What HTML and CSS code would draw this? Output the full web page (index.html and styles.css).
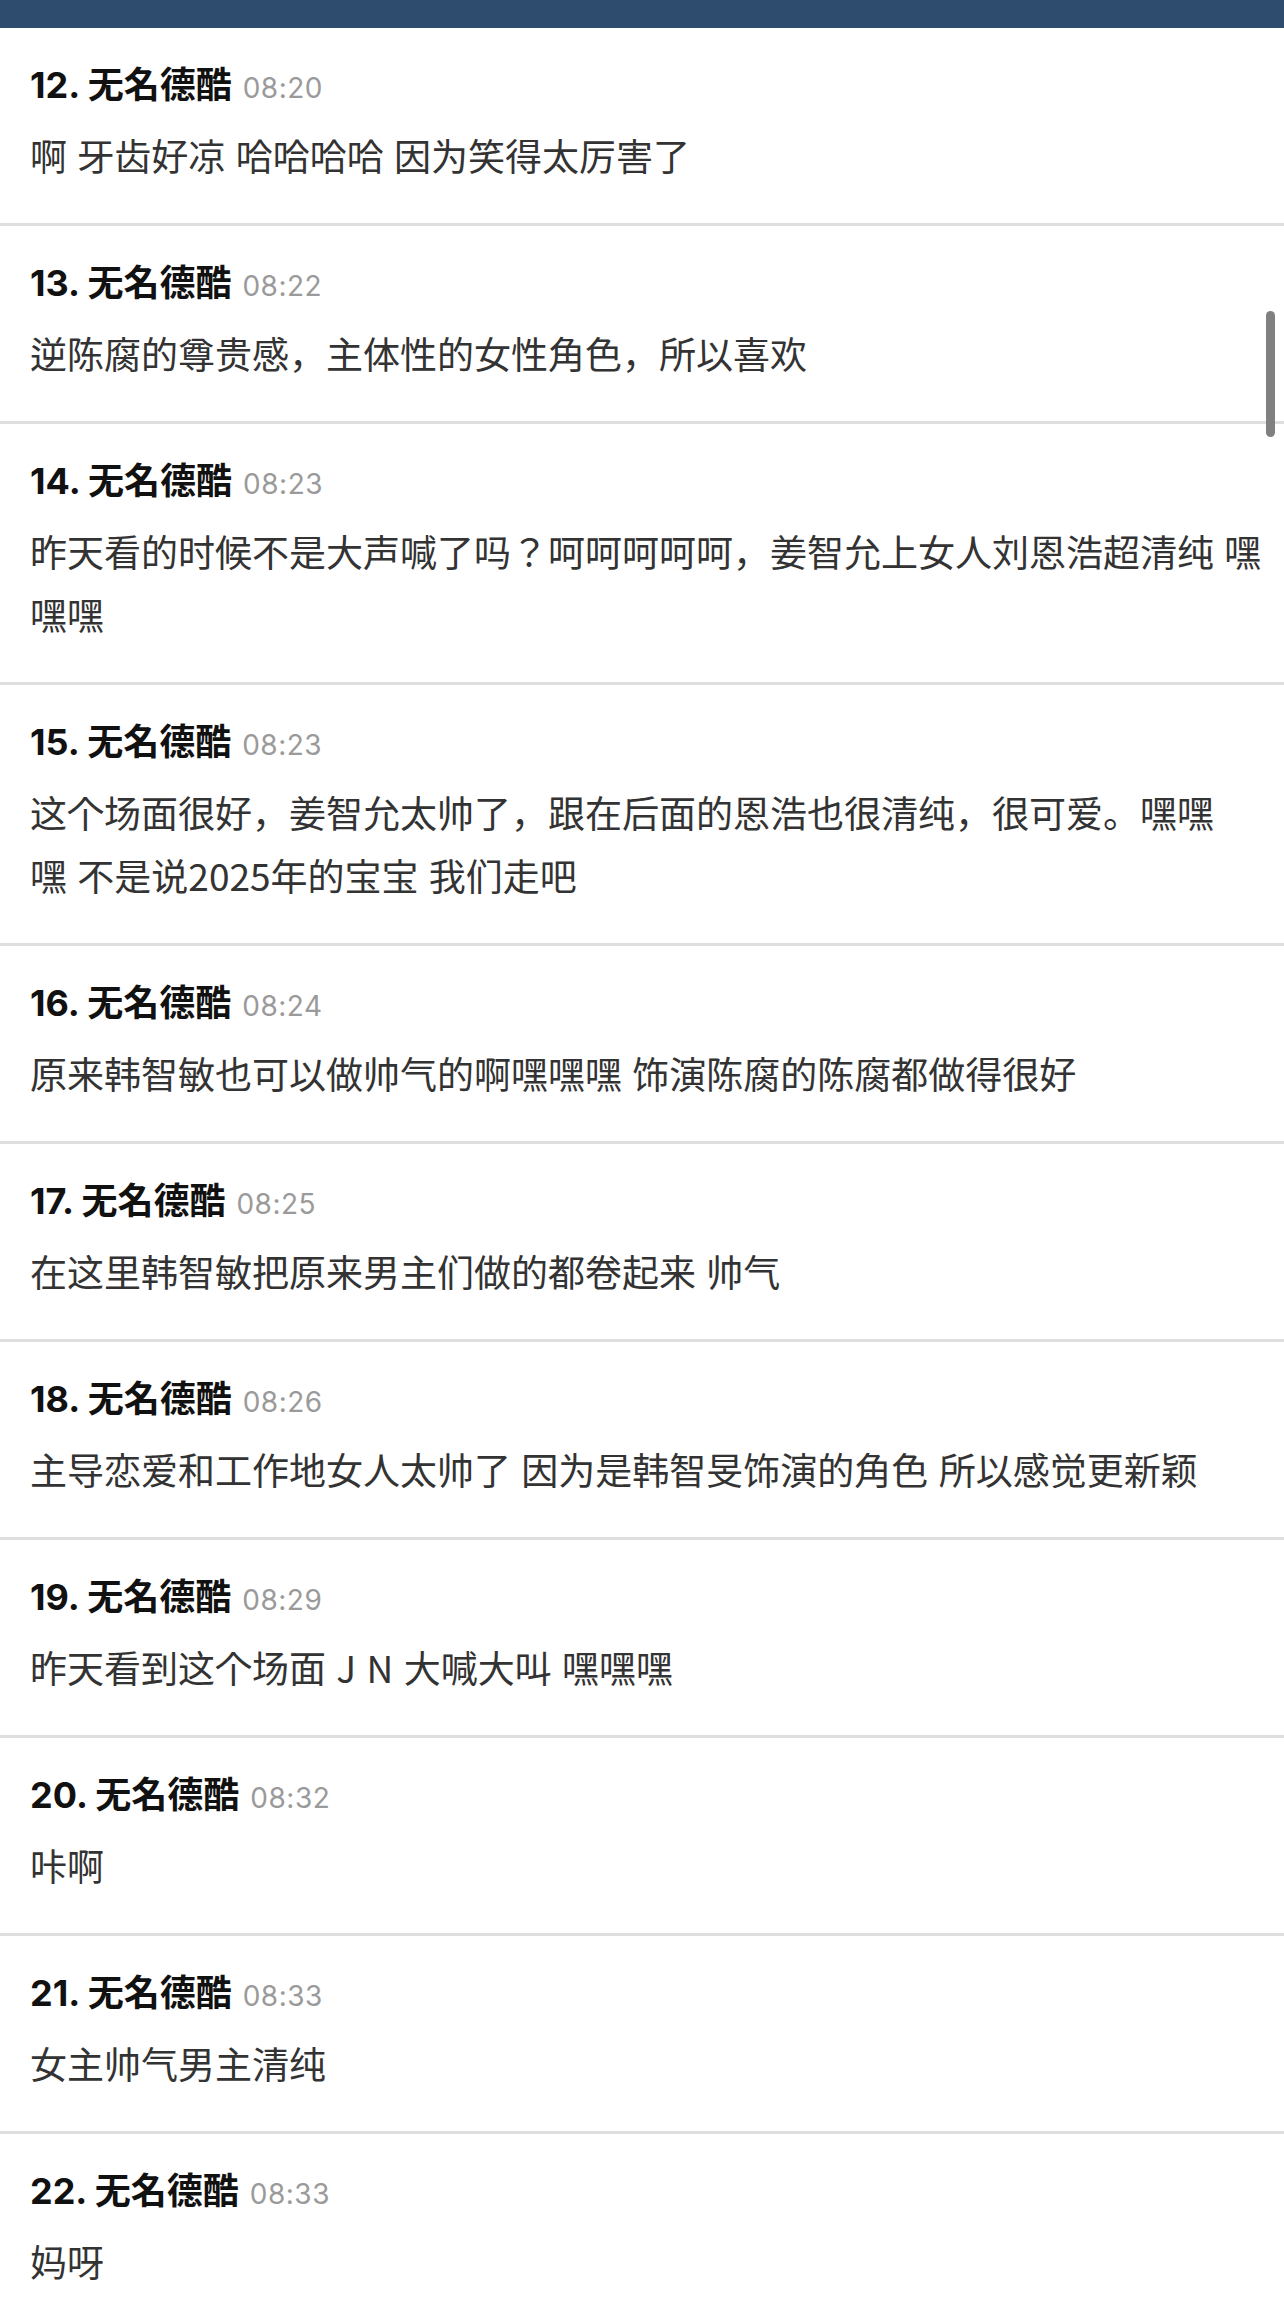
FILE: index.html
```html
<!DOCTYPE html>
<html lang="ko">
<head>
    <meta charset="UTF-8">
    <meta name="viewport" content="width=device-width, initial-scale=1.0">
    <title>评论</title>
    <link rel="stylesheet" href="styles.css">
</head>
<body>
    <div class="topbar"></div>

    <div class="comments">
        <div class="comment">
            <div class="meta"><span class="name">12. 无名德酷</span><span class="time">08:20</span></div>
            <p class="text">啊 牙齿好凉 哈哈哈哈 因为笑得太厉害了</p>
        </div>
        <div class="comment">
            <div class="meta"><span class="name">13. 无名德酷</span><span class="time">08:22</span></div>
            <p class="text">逆陈腐的尊贵感，主体性的女性角色，所以喜欢</p>
        </div>
        <div class="comment">
            <div class="meta"><span class="name">14. 无名德酷</span><span class="time">08:23</span></div>
            <p class="text">昨天看的时候不是大声喊了吗？呵呵呵呵呵，姜智允上女人刘恩浩超清纯 嘿嘿嘿</p>
        </div>
        <div class="comment">
            <div class="meta"><span class="name">15. 无名德酷</span><span class="time">08:23</span></div>
            <p class="text">这个场面很好，姜智允太帅了，跟在后面的恩浩也很清纯，很可爱。嘿嘿<br>嘿 不是说2025年的宝宝 我们走吧</p>
        </div>
        <div class="comment">
            <div class="meta"><span class="name">16. 无名德酷</span><span class="time">08:24</span></div>
            <p class="text">原来韩智敏也可以做帅气的啊嘿嘿嘿 饰演陈腐的陈腐都做得很好</p>
        </div>
        <div class="comment">
            <div class="meta"><span class="name">17. 无名德酷</span><span class="time">08:25</span></div>
            <p class="text">在这里韩智敏把原来男主们做的都卷起来 帅气</p>
        </div>
        <div class="comment">
            <div class="meta"><span class="name">18. 无名德酷</span><span class="time">08:26</span></div>
            <p class="text">主导恋爱和工作地女人太帅了 因为是韩智旻饰演的角色 所以感觉更新颖</p>
        </div>
        <div class="comment">
            <div class="meta"><span class="name">19. 无名德酷</span><span class="time">08:29</span></div>
            <p class="text">昨天看到这个场面 J N 大喊大叫 嘿嘿嘿</p>
        </div>
        <div class="comment">
            <div class="meta"><span class="name">20. 无名德酷</span><span class="time">08:32</span></div>
            <p class="text">咔啊</p>
        </div>
        <div class="comment">
            <div class="meta"><span class="name">21. 无名德酷</span><span class="time">08:33</span></div>
            <p class="text">女主帅气男主清纯</p>
        </div>
        <div class="comment">
            <div class="meta"><span class="name">22. 无名德酷</span><span class="time">08:33</span></div>
            <p class="text">妈呀</p>
        </div>
    </div>

    <div class="scroll-thumb"></div>
</body>
</html>
```

FILE: styles.css
```css
body {
    font-family: "Noto Sans CJK KR", sans-serif;
    margin: 0;
    padding: 0;
    background-color: #fff;
    overflow: hidden;
}
.topbar {
    height: 28px;
    background-color: #2e4c6d;
}
.comment {
    padding: 32px 20px 36px 30px;
    border-bottom: 3px solid #dedede;
}
.meta {
    display: flex;
    align-items: baseline;
    height: 50px;
    line-height: 50px;
    margin-bottom: 14px;
}
.name {
    font-family: Inter, "Noto Sans CJK KR", sans-serif;
    font-size: 36px;
    font-weight: bold;
    color: #111;
}
.time {
    font-family: Inter, sans-serif;
    font-size: 28px;
    letter-spacing: 0.5px;
    color: #9a9a9a;
    margin-left: 11px;
}
.text {
    margin: 0;
    font-size: 37px;
    line-height: 63px;
    color: #333;
}
.scroll-thumb {
    position: fixed;
    top: 311px;
    right: 9px;
    width: 9px;
    height: 126px;
    border-radius: 5px;
    background-color: #808080;
}
```
